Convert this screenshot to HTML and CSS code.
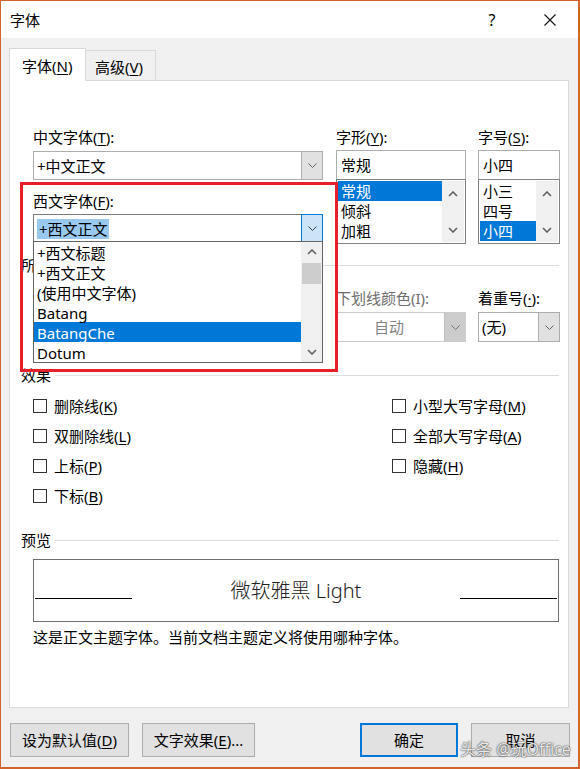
FILE: index.html
```html
<!DOCTYPE html>
<html lang="zh-CN">

<head>
  <meta charset="UTF-8">
  <title>字体</title>
  <link rel="stylesheet" href="styles.css">
</head>

<body>
  <div class="window">
    <div class="title-bar">
      <span class="title">字体</span>
      <span class="help">?</span>
      <span class="close">
        <svg width="12" height="12" viewBox="0 0 12 12"><path d="M0.5 0.5 L11.5 11.5 M11.5 0.5 L0.5 11.5" stroke="#111" stroke-width="1.1" fill="none"/></svg>
      </span>
    </div>

    <div class="dialog">
      <div class="tabs">
        <div class="tab active">字体(<u>N</u>)</div>
        <div class="tab">高级(<u>V</u>)</div>
      </div>

      <div class="panel">
        <div class="font-grid">
          <div class="field-col">
            <div class="field-label">中文字体(<u>T</u>):</div>
            <div class="combo first">
              <span class="combo-text">+中文正文</span>
              <span class="combo-btn"><svg width="9" height="5" viewBox="0 0 9 5"><path d="M0.5 0.5 L4.5 4.5 L8.5 0.5" fill="none" stroke="#606060"/></svg></span>
            </div>
            <div class="field-label second">西文字体(<u>F</u>):</div>
            <div class="combo-wrap">
              <div class="combo focused">
                <span class="combo-text"><span class="text-sel">+西文正文</span></span>
                <span class="combo-btn"><svg width="9" height="5" viewBox="0 0 9 5"><path d="M0.5 0.5 L4.5 4.5 L8.5 0.5" fill="none" stroke="#404040"/></svg></span>
              </div>
              <!-- open drop-down of the western font combo -->
              <div class="dropdown">
                <div class="list-items">
                  <div class="item">+西文标题</div>
                  <div class="item">+西文正文</div>
                  <div class="item">(使用中文字体)</div>
                  <div class="item">Batang</div>
                  <div class="item selected">BatangChe</div>
                  <div class="item">Dotum</div>
                </div>
                <div class="drop-scroll">
                  <span class="arrow"><svg width="10" height="6" viewBox="0 0 10 6"><path d="M1 5 L5 1 L9 5" fill="none" stroke="#606060" stroke-width="1.6"/></svg></span>
                  <span class="thumb"></span>
                  <span class="track"></span>
                  <span class="arrow"><svg width="10" height="6" viewBox="0 0 10 6"><path d="M1 1 L5 5 L9 1" fill="none" stroke="#606060" stroke-width="1.6"/></svg></span>
                </div>
              </div>
            </div>
          </div>

          <div class="field-col">
            <div class="field-label">字形(<u>Y</u>):</div>
            <div class="textbox">常规</div>
            <div class="listbox">
              <div class="list-items">
                <div class="item selected">常规</div>
                <div class="item">倾斜</div>
                <div class="item">加粗</div>
              </div>
              <div class="list-scroll">
                <svg width="10" height="6" viewBox="0 0 10 6"><path d="M1 5 L5 1 L9 5" fill="none" stroke="#606060" stroke-width="1.6"/></svg>
                <svg width="10" height="6" viewBox="0 0 10 6"><path d="M1 1 L5 5 L9 1" fill="none" stroke="#606060" stroke-width="1.6"/></svg>
              </div>
            </div>
          </div>

          <div class="field-col">
            <div class="field-label">字号(<u>S</u>):</div>
            <div class="textbox">小四</div>
            <div class="listbox">
              <div class="list-items">
                <div class="item">小三</div>
                <div class="item">四号</div>
                <div class="item selected">小四</div>
              </div>
              <div class="list-scroll">
                <svg width="10" height="6" viewBox="0 0 10 6"><path d="M1 5 L5 1 L9 5" fill="none" stroke="#606060" stroke-width="1.6"/></svg>
                <svg width="10" height="6" viewBox="0 0 10 6"><path d="M1 1 L5 5 L9 1" fill="none" stroke="#606060" stroke-width="1.6"/></svg>
              </div>
            </div>
          </div>
        </div>

        <div class="section-head head-all"><span>所有文字</span></div>

        <!-- first two fields sit under the open drop-down -->
        <div class="attr-grid">
          <div class="field-col">
            <div class="field-label"></div>
            <div class="combo">
              <span class="combo-text"></span>
              <span class="combo-btn"></span>
            </div>
          </div>
          <div class="field-col">
            <div class="field-label"></div>
            <div class="combo">
              <span class="combo-text"></span>
              <span class="combo-btn"></span>
            </div>
          </div>
          <div class="field-col">
            <div class="field-label disabled">下划线颜色(I):</div>
            <div class="combo disabled">
              <span class="combo-text center">自动</span>
              <span class="combo-btn"><svg width="9" height="5" viewBox="0 0 9 5"><path d="M0.5 0.5 L4.5 4.5 L8.5 0.5" fill="none" stroke="#707070"/></svg></span>
            </div>
          </div>
          <div class="field-col">
            <div class="field-label">着重号(<u>·</u>):</div>
            <div class="combo">
              <span class="combo-text">(无)</span>
              <span class="combo-btn"><svg width="9" height="5" viewBox="0 0 9 5"><path d="M0.5 0.5 L4.5 4.5 L8.5 0.5" fill="none" stroke="#606060"/></svg></span>
            </div>
          </div>
        </div>

        <div class="section-head head-effects"><span>效果</span></div>

        <div class="effects">
          <label class="check"><span class="box"></span>删除线(<u>K</u>)</label>
          <label class="check"><span class="box"></span>小型大写字母(<u>M</u>)</label>
          <label class="check"><span class="box"></span>双删除线(<u>L</u>)</label>
          <label class="check"><span class="box"></span>全部大写字母(<u>A</u>)</label>
          <label class="check"><span class="box"></span>上标(<u>P</u>)</label>
          <label class="check"><span class="box"></span>隐藏(<u>H</u>)</label>
          <label class="check"><span class="box"></span>下标(<u>B</u>)</label>
        </div>

        <div class="section-head head-preview"><span>预览</span></div>

        <div class="preview">
          <span class="base-line left"></span>
          <span class="preview-text">微软雅黑 Light</span>
          <span class="base-line right"></span>
        </div>
        <div class="preview-note">这是正文主题字体。当前文档主题定义将使用哪种字体。</div>

        <div class="annotation"></div>
      </div>

      <div class="footer">
        <button class="btn btn-default">设为默认值(<u>D</u>)</button>
        <button class="btn btn-effects">文字效果(<u>E</u>)...</button>
        <button class="btn btn-ok">确定</button>
        <button class="btn btn-cancel">取消</button>
      </div>
    </div>

    <div class="watermark">头条 @玩Office</div>
  </div>
</body>

</html>
```

FILE: styles.css
```css
* {
  box-sizing: border-box;
}

body {
  margin: 0;
  font-family: "Noto Sans", "Noto Sans CJK SC", sans-serif;
  font-size: 15px;
  line-height: 20px;
  color: #000;
}

u {
  text-decoration-thickness: 1px;
  text-underline-offset: 2px;
}

.window {
  position: relative;
  width: 580px;
  height: 769px;
  background: #f0f0f0;
  border: solid #d3632c;
  border-width: 1px 2px 2px 1px;
  overflow: hidden;
}

.title-bar {
  display: flex;
  align-items: center;
  height: 37px;
  background: #fff;
  padding-left: 9px;
}

.help {
  margin-left: auto;
  width: 20px;
  text-align: center;
  font-size: 16px;
}

.close {
  display: flex;
  margin-left: 42px;
  margin-right: 22px;
}

.dialog {
  padding: 10px 9px 0 8px;
}

.tabs {
  display: flex;
  align-items: flex-end;
}

.tab {
  border: 1px solid #d9d9d9;
  border-bottom: none;
  background: #f0f0f0;
}

.tab.active {
  position: relative;
  z-index: 1;
  width: 77px;
  padding: 7px 0 5px 12px;
  margin-bottom: -1px;
  background: #fff;
}

.tab + .tab {
  width: 70px;
  padding: 6px 0 3px 9px;
  border-left: none;
}

.panel {
  position: relative;
  height: 628px;
  background: #fff;
  border: 1px solid #d9d9d9;
  padding: 46px 9px 0 11px;
}

.font-grid,
.attr-grid {
  display: grid;
  grid-template-columns: 290px 130px 81px;
  column-gap: 13px;
  margin-left: 12px;
}

.font-grid > .field-col:last-child,
.attr-grid > .field-col:last-child {
  margin-left: -1px;
}

.attr-grid {
  grid-template-columns: 138px 139px 130px 81px;
  margin-top: 13px;
}

.field-col {
  display: flex;
  flex-direction: column;
}

.field-label {
  height: 20px;
  white-space: nowrap;
}

.field-label.second {
  margin-top: 11px;
}

.field-label.disabled {
  color: #6d6d6d;
}

.combo {
  display: flex;
  height: 29px;
  margin-top: 3px;
  border: 1px solid #adadad;
  background: #fff;
}

.combo.first {
  margin-top: 4px;
}

.attr-grid .combo {
  height: 30px;
  margin-top: 4px;
}

.combo-text {
  flex: 1;
  display: flex;
  align-items: center;
  padding-left: 3px;
  white-space: nowrap;
}

.combo-text.center {
  justify-content: center;
  padding-right: 6px;
}

.combo-btn {
  display: flex;
  align-items: center;
  justify-content: center;
  width: 21px;
  background: #e1e1e1;
  border-left: 1px solid #adadad;
}

.combo.focused {
  border-color: #7a7a7a;
}

.combo.focused .combo-btn {
  width: 22px;
  margin: -1px -1px -1px 0;
  background: #cce4f7;
  border: 1px solid #0078d7;
}

.combo.disabled {
  border-color: #cccccc;
  color: #838383;
}

.combo.disabled .combo-btn {
  background: #cccccc;
  border-left-color: #bfbfbf;
}

.text-sel {
  background: #99c9ef;
  padding: 0 1px 0 2px;
}

.combo-wrap {
  position: relative;
}

.dropdown {
  position: absolute;
  z-index: 3;
  top: 30px;
  left: 0;
  display: flex;
  width: 290px;
  height: 122px;
  background: #fff;
  border: 1px solid #646464;
}

.list-items {
  flex: 1;
}

.item {
  height: 20px;
  padding: 2px 0 0 3px;
  line-height: 18px;
  white-space: nowrap;
}

.item.selected {
  background: #0078d7;
  color: #fff;
}

.drop-scroll {
  display: flex;
  flex-direction: column;
  width: 21px;
  background: #f0f0f0;
}

.drop-scroll .arrow {
  display: flex;
  align-items: center;
  justify-content: center;
  height: 20px;
}

.drop-scroll .thumb {
  height: 21px;
  margin: 1px 1px 0;
  background: #cdcdcd;
}

.drop-scroll .track {
  flex: 1;
}

.textbox {
  height: 30px;
  margin-top: 3px;
  padding-left: 4px;
  display: flex;
  align-items: center;
  border: 1px solid #adadad;
}

.listbox {
  display: flex;
  height: 65px;
  margin-top: -1px;
  padding: 1px;
  border: 1px solid #828282;
}

.listbox .item {
  padding-top: 1px;
  line-height: 19px;
}

.list-scroll {
  display: flex;
  flex-direction: column;
  justify-content: space-between;
  align-items: center;
  width: 22px;
  padding: 10px 0 9px;
  background: #f0f0f0;
}

.section-head {
  display: flex;
  align-items: center;
  height: 20px;
}

.section-head::after {
  content: "";
  flex: 1;
  margin-left: 4px;
  border-top: 1px solid #dcdcdc;
}

.head-all {
  margin-top: 11px;
}

.head-effects {
  margin-top: 23px;
}

.head-preview {
  margin-top: 19px;
}

.effects {
  display: grid;
  grid-template-columns: 359px 1fr;
  grid-auto-rows: 30px;
  margin: 6px 0 0 12px;
}

.check {
  display: flex;
  align-items: center;
  white-space: nowrap;
}

.check .box {
  width: 14px;
  height: 14px;
  margin-right: 7px;
  border: 1px solid #333;
  background: #fff;
}

.preview {
  display: flex;
  align-items: flex-start;
  height: 63px;
  margin: 9px 0 0 12px;
  border: 1px solid #6d6d6d;
}

.base-line {
  width: 97px;
  margin-top: 38px;
  border-top: 1px solid #000;
}

.base-line.left {
  margin-left: 1px;
}

.base-line.right {
  margin-right: 1px;
}

.preview-text {
  flex: 1;
  margin-top: 18px;
  text-align: center;
  font-size: 20px;
  line-height: 26px;
  font-weight: 300;
  color: #222;
}

.preview-note {
  margin: 5px 0 0 12px;
}

/* red frame drawn over the screenshot */
.annotation {
  position: absolute;
  z-index: 4;
  left: 10px;
  top: 101px;
  width: 318px;
  height: 190px;
  border: 3px solid #e5202a;
}

.footer {
  display: flex;
  margin-top: 15px;
  padding-left: 1px;
}

.btn {
  height: 34px;
  font: inherit;
  color: #000;
  background: #e1e1e1;
  border: 1px solid #adadad;
  padding: 0;
}

.btn-default {
  width: 119px;
}

.btn-effects {
  width: 113px;
  margin-left: 13px;
}

.btn-ok {
  width: 98px;
  margin-left: auto;
  border: 2px solid #0078d7;
}

.btn-cancel {
  width: 99px;
  margin-left: 13px;
  margin-right: -1px;
}

.watermark {
  position: absolute;
  left: 459px;
  top: 738px;
  font-size: 16px;
  line-height: 20px;
  color: rgba(255, 255, 255, 0.9);
  text-shadow: 0 0 2px rgba(0, 0, 0, 0.7), 0 0 1px rgba(0, 0, 0, 0.6);
}
```
